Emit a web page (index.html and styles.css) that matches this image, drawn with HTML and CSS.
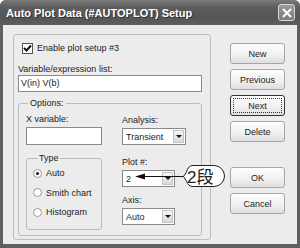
FILE: index.html
```html
<!DOCTYPE html>
<html lang="en">
<head>
    <meta charset="UTF-8">
    <title>Auto Plot Data Setup</title>
    <link rel="stylesheet" href="styles.css">
</head>
<body>
    <div class="window">
        <div class="titlebar">
            <span class="title">Auto Plot Data (#AUTOPLOT) Setup</span>
            <span class="close">
                <svg width="10" height="10" viewBox="0 0 10 10"><path d="M1 1 L9 9 M9 1 L1 9" stroke="#fff" stroke-width="2"/></svg>
            </span>
        </div>
        <div class="client">
            <div class="main-group">
                <div class="check-row">
                    <span class="checkbox">
                        <svg width="9" height="9" viewBox="0 0 9 9"><path d="M1 4 L3.5 6.5 L8 1.5" stroke="#111" stroke-width="2" fill="none"/></svg>
                    </span>
                    Enable plot setup #3
                </div>
                <div class="label list-label">Variable/expression list:</div>
                <div class="textbox list-box">V(in) V(b)</div>
                <fieldset class="options">
                    <legend>Options:</legend>
                    <div class="opt-cols">
                        <div class="col-left">
                            <div class="label">X variable:</div>
                            <div class="textbox xvar"></div>
                            <fieldset class="type">
                                <legend>Type</legend>
                                <div class="radio-row"><span class="radio on"></span>Auto</div>
                                <div class="radio-row"><span class="radio"></span>Smith chart</div>
                                <div class="radio-row"><span class="radio"></span>Histogram</div>
                            </fieldset>
                        </div>
                        <div class="col-right">
                            <div class="label">Analysis:</div>
                            <div class="select analysis"><span class="val">Transient</span><span class="drop"></span></div>
                            <div class="label plot-label">Plot #:</div>
                            <div class="select short"><span class="val">2</span><span class="drop"></span></div>
                            <div class="label axis-label">Axis:</div>
                            <div class="select short"><span class="val">Auto</span><span class="drop"></span></div>
                        </div>
                    </div>
                </fieldset>
            </div>
            <div class="buttons">
                <div class="btn">New</div>
                <div class="btn">Previous</div>
                <div class="btn default"><span class="focus">Next</span></div>
                <div class="btn">Delete</div>
                <div class="btn ok">OK</div>
                <div class="btn">Cancel</div>
            </div>
        </div>
        <svg class="callout" width="100" height="36" viewBox="130 158 100 36">
            <path d="M193 165.5 H214 A10.5 10.5 0 0 1 214 186.5 H193 Q188 186.5 186.5 181 L183.5 176.5 L186.5 172 Q188 165.5 193 165.5 Z" fill="#fff" stroke="#222" stroke-width="1"/>
            <line x1="143" y1="176.5" x2="183.5" y2="176.5" stroke="#111" stroke-width="1.2"/>
            <path d="M135 176.5 L145 173.5 L145 179.5 Z" fill="#111"/>
            <text x="187" y="182.5" class="callout-text">2段</text>
        </svg>
    </div>
</body>
</html>
```

FILE: styles.css
```css
*{
    box-sizing: border-box;
    margin: 0;
    padding: 0;
}
body{
    background: #fff;
    font-family: "Liberation Sans", Arial, sans-serif;
    font-size: 9px;
    color: #222;
}
.window{
    position: relative;
    width: 300px;
    height: 248px;
    background: #5f5f5f;
    border-radius: 6px 6px 0 0;
    display: flex;
    flex-direction: column;
}
.titlebar{
    height: 25px;
    flex: 0 0 25px;
    display: flex;
    align-items: center;
    justify-content: space-between;
    padding: 0 5px 0 6px;
    border-radius: 6px 6px 0 0;
    background: linear-gradient(#7a7a7a, #5c5c5c 30%, #555 70%, #5e5e5e);
}
.title{
    color: #fff;
    font-weight: bold;
    font-size: 11px;
    text-shadow: 1px 1px 0 #333;
    padding-top: 1px;
}
.close{
    width: 17px;
    height: 17px;
    border: 1px solid #d8d8d8;
    border-radius: 3px;
    background: linear-gradient(#9a9a9a, #7c7c7c);
    display: flex;
    align-items: center;
    justify-content: center;
}
.client{
    flex: 1;
    margin: 0 3px 4px 3px;
    background: #ececec;
    display: flex;
    align-items: flex-start;
}
.main-group{
    width: 198px;
    height: 206px;
    margin: 9px 0 0 10px;
    border: 1px solid #bcbcbc;
    border-radius: 3px;
    padding: 7px 10px 0 4px;
}
.check-row{
    display: flex;
    align-items: center;
    height: 12px;
    margin-left: 4px;
    gap: 4px;
}
.checkbox{
    width: 11px;
    height: 11px;
    border: 1px solid #555;
    background: #fff;
    display: flex;
    align-items: center;
    justify-content: center;
}
.label{
    height: 11px;
    line-height: 11px;
}
.list-label{
    margin-top: 10px;
}
.textbox{
    background: #fff;
    border: 1px solid #8a8a8a;
    height: 17px;
    line-height: 15px;
    padding-left: 2px;
}
.list-box{
    margin-top: 0;
    width: 184px;
}
.options{
    margin-top: 6px;
    width: 184px;
    height: 138px;
    border: 1px solid #bcbcbc;
    border-radius: 3px;
    padding: 5px 0 0 7px;
}
.options legend{
    padding: 0 2px;
    margin-left: 2px;
    line-height: 11px;
}
.opt-cols{
    display: flex;
    gap: 20px;
}
.col-left{
    width: 76px;
}
.xvar{
    margin-top: 2px;
    height: 18px;
}
.type{
    margin-top: 8px;
    height: 77px;
    border: 1px solid #bcbcbc;
    border-radius: 3px;
    padding: 3px 0 0 6px;
}
.type legend{
    padding: 0 1px;
    margin-left: 5px;
    line-height: 11px;
}
.radio-row{
    display: flex;
    align-items: center;
    height: 12px;
    margin-bottom: 7.5px;
    gap: 4px;
}
.radio{
    width: 9px;
    height: 9px;
    border-radius: 50%;
    border: 1px solid #9a9a9a;
    background: #fff;
    display: flex;
    align-items: center;
    justify-content: center;
}
.radio.on::after{
    content: "";
    width: 3px;
    height: 3px;
    border-radius: 50%;
    background: #111;
}
.col-right{
    padding-top: 1px;
}
.select{
    background: #fff;
    border: 1px solid #8a8a8a;
    height: 17px;
    display: flex;
    align-items: center;
    justify-content: space-between;
    padding: 1px;
    margin-top: 2px;
}
.select .val{
    padding-left: 2px;
}
.select .drop{
    width: 11px;
    height: 13px;
    background: linear-gradient(#f6f6f6, #d8d8d8);
    border: 1px solid #c4c4c4;
    display: flex;
    align-items: center;
    justify-content: center;
}
.select .drop::after{
    content: "";
    border-left: 3px solid transparent;
    border-right: 3px solid transparent;
    border-top: 3px solid #111;
}
.analysis{
    width: 64px;
}
.short{
    width: 53px;
}
.plot-label{
    margin-top: 12px;
}
.axis-label{
    margin-top: 8px;
}
.buttons{
    margin: 18px 0 0 19px;
    display: flex;
    flex-direction: column;
    gap: 5px;
}
.btn{
    width: 55px;
    height: 21px;
    border: 1px solid #a6a6a6;
    border-radius: 3px;
    background: linear-gradient(#fdfdfd, #f0f0f0 60%, #dedede);
    display: flex;
    align-items: center;
    justify-content: center;
}
.btn.default{
    border-color: #333;
}
.btn .focus{
    width: 49px;
    height: 15px;
    border: 1px dotted #333;
    display: flex;
    align-items: center;
    justify-content: center;
}
.btn.ok{
    margin-top: 20px;
}
.callout{
    position: absolute;
    left: 130px;
    top: 158px;
}
.callout-text{
    font-family: "Liberation Sans", "Noto Sans CJK JP", sans-serif;
    font-size: 17px;
    fill: #222;
}
```
